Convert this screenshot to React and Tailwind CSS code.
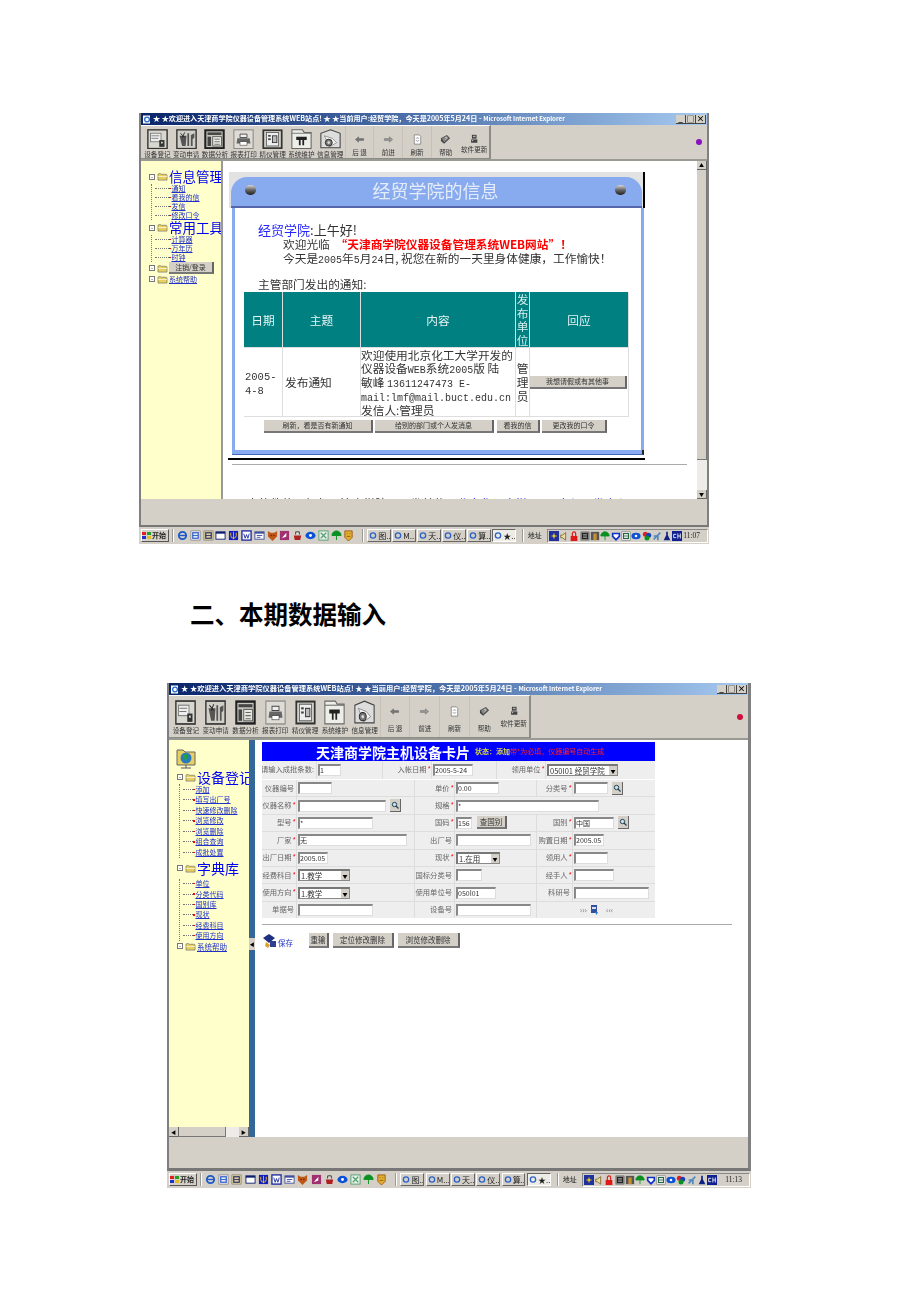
import React from "react";

const CJK = { fontFamily: '"Noto Sans CJK SC","Noto Sans",sans-serif' };

function ToolIcon({ id, className }) {
  const s = { className, viewBox: "0 0 24 24", preserveAspectRatio: "none" };
  if (id === 0) return <svg {...s}><rect x="1" y="1" width="22" height="22" fill="#d8d8d0" stroke="#333" strokeWidth="1.6"/><rect x="4" y="5" width="12" height="10" fill="#eee" stroke="#777"/><path d="M5 8h9M5 11h8" stroke="#777"/><rect x="14" y="13" width="6" height="8" fill="#333"/><rect x="16" y="15" width="2" height="2" fill="#ddd"/></svg>;
  if (id === 1) return <svg {...s}><rect x="1" y="1" width="22" height="22" fill="#d0d0c8" stroke="#333" strokeWidth="1.6"/><path d="M4 8l3 12h4l1-12zM13 5h2v15h-2zM17 7l4-2v5l-2 2v8h-2z" fill="#555"/><path d="M5 5l5 5M10 4l-3 6" stroke="#222"/></svg>;
  if (id === 2) return <svg {...s}><rect x="1.5" y="1.5" width="21" height="21" fill="#c8c8c0" stroke="#222" strokeWidth="2.4"/><rect x="4" y="4" width="16" height="3" fill="#444"/><rect x="4" y="9" width="4" height="11" fill="#444"/><rect x="10" y="9" width="10" height="11" fill="#e8e8e0" stroke="#555"/><path d="M12 12h6M12 15h6M12 18h6" stroke="#666"/></svg>;
  if (id === 3) return <svg {...s}><rect x="1" y="1" width="22" height="22" fill="#dedcd4" stroke="#888" strokeWidth="1.2"/><path d="M8 6h8v4H8z" fill="#eee" stroke="#444"/><path d="M5 11h14l1 6H4z" fill="#666"/><rect x="8" y="15" width="8" height="4" fill="#fff" stroke="#333" strokeWidth=".6"/></svg>;
  if (id === 4) return <svg {...s}><rect x="1.5" y="1.5" width="21" height="21" fill="#d8d8d0" stroke="#333" strokeWidth="2"/><rect x="5" y="4" width="14" height="16" fill="#eee" stroke="#555"/><rect x="7" y="7" width="3" height="2" fill="#444"/><rect x="7" y="11" width="3" height="2" fill="#444"/><rect x="12" y="8" width="5" height="8" fill="#bbb" stroke="#333"/></svg>;
  if (id === 5) return <svg {...s}><path d="M1 5V1h12l2 3h8v19H1z" fill="#eeeee8" stroke="#666" strokeWidth="1.2"/><path d="M1 5h22" stroke="#666"/><path d="M6 9h12v4h-3v6h-2v-6h-2v6H9v-6H6z" fill="#222"/></svg>;
  if (id === 6) return <svg {...s}><path d="M12 1l11 4v17H1V5z" fill="#ddd" stroke="#444" strokeWidth="1.2"/><path d="M5 8l9 3 5 5-8 5z" fill="#f4f4f0" stroke="#666" strokeWidth=".7"/><circle cx="10" cy="16" r="4" fill="#777" stroke="#222"/><circle cx="10" cy="16" r="1.5" fill="#ddd"/></svg>;
  if (id === "back") return <svg {...s}><path d="M3 12l7-6v4h11v4H10v4z" fill="#777" stroke="#444" strokeWidth=".7"/></svg>;
  if (id === "fwd") return <svg {...s}><path d="M21 12l-7-6v4H3v4h11v4z" fill="#999" stroke="#444" strokeWidth=".7"/></svg>;
  if (id === "ref") return <svg {...s}><path d="M5 2h11l3 3v17H5z" fill="#fff" stroke="#555" strokeWidth="1.2"/><path d="M9 10a3.5 3.5 0 0 1 6 0M15 14a3.5 3.5 0 0 1-6 0" fill="none" stroke="#444" strokeWidth="1.3"/></svg>;
  if (id === "help") return <svg {...s}><path d="M2 9l13-7 7 7-13 12-7-6z" fill="#444"/><path d="M4 10l11-6 4 5-10 9z" fill="#888"/><path d="M11 8c2-2 5 0 3 2l-2 2" fill="none" stroke="#eee" strokeWidth="1.4"/></svg>;
  return <svg {...s}><rect x="7" y="2" width="11" height="9" fill="#333"/><rect x="9" y="4" width="7" height="4" fill="#aaa"/><rect x="5" y="13" width="15" height="8" fill="#444"/><rect x="7" y="15" width="3" height="2" fill="#ddd"/></svg>;
}

const TOOLS = ["设备登记", "变动申请", "数据分析", "报表打印", "精仪管理", "系统维护", "信息管理"];

function Toolbar({ item, toolbarClass, iconClass, dotColor, mainPt, navClass, navLabel, softLabel }) {
  return (
    <div className="flex items-stretch justify-between bg-[#d4d0c8] border-b-2 border-[#9a9a94] pr-[5px]">
      <div className={`flex border-r-2 border-b border-[#8c8c86] border-t border-t-white ${toolbarClass}`}>
        {TOOLS.map((t, i) => (
          <div key={t} className={`${item} ${mainPt} flex flex-col items-center whitespace-nowrap text-[#333] leading-none text-[6.6px] gap-[2px]`}>
            <ToolIcon id={i} className={iconClass} />
            <span>{t}</span>
          </div>
        ))}
        {[["back", "后 退"], ["fwd", "前进"], ["ref", "刷新"], ["help", "帮助"]].map(([id, t]) => (
          <div key={id} className={`${item} flex flex-col items-center whitespace-nowrap text-[#333] leading-none text-[6.6px] border-l border-[#c6c2ba] ${navClass}`}>
            <ToolIcon id={id} className="w-[11px] h-[11px]" />
            <span className={navLabel}>{t}</span>
          </div>
        ))}
        <div className={`${item} flex flex-col items-center whitespace-nowrap text-[#333] leading-none text-[6.6px] ${navClass}`}>
          <ToolIcon id="soft" className="w-[10px] h-[10px]" />
          <span className={softLabel}>软件更新</span>
        </div>
      </div>
      <span className={`self-center w-[6px] h-[6px] rounded-full ${dotColor}`} />
    </div>
  );
}

function TitleBar({ textClass }) {
  return (
    <div className="h-[12px] flex items-center justify-between pl-[2px] pr-[1px] bg-gradient-to-r from-[#0a246a] to-[#a6caf0]">
      <div className={`flex items-center gap-[2px] whitespace-nowrap overflow-hidden font-bold text-white ${textClass}`}>
        <svg className="w-[8px] h-[9px] shrink-0" viewBox="0 0 8 9"><rect width="7" height="8" y=".5" fill="#fff"/><circle cx="4" cy="4.5" r="2.4" fill="none" stroke="#2a6fd0" strokeWidth="1.3"/></svg>
        <span>★ ★欢迎进入天津商学院仪器设备管理系统WEB站点! ★ ★当前用户:经贸学院，今天是2005年5月24日 - <span className="text-[0.87em]">Microsoft Internet Explorer</span></span>
      </div>
      <div className="flex gap-0 shrink-0">
        {["_", "□", "×"].map((c) => (
          <span key={c} className="w-[10px] h-[9px] bg-[#d4d0c8] border-r border-b border-[#444] text-black text-[8px] leading-[8px] text-center font-bold">{c}</span>
        ))}
      </div>
    </div>
  );
}

const TB = [
  ["#1c58c8", "#fff", "e"], ["#e8e8f8", "#2c5ec8", "s"], ["#d8d0a0", "#336", "n"], ["#fff", "#102070", "w"], ["#1020c0", "#f0c020", "y"], ["#2030a0", "#fff", "W"], ["#40509c", "#fff", "b"], ["#c05818", "#602010", "f"], ["#a03070", "#fff", "p"], ["#e0e0e0", "#b02020", "r"], ["#0a50d8", "#fff", "c"], ["#50a070", "#fff", "x"], ["#fff", "#0a9020", "u"], ["#e0b030", "#a05810", "l"],
];
const TRAY = [
  ["#20309c", "#e8d020", "g"], ["#d4d0c8", "#806030", "v"], ["#e01818", "#200", "k"], ["#888", "#222", "m"], ["#555", "#c89030", "d"], ["#fff", "#0a9020", "u"], ["#1030c8", "#fff", "o"], ["#eee", "#264", "n"], ["#0a50d8", "#fff", "c"], ["#e02020", "#0a9020", "q"], ["#5088c0", "#444", "z"], ["#d4d0c8", "#102080", "t"], ["#102090", "#fff", "C"],
];

function Glyph({ g, cls = "w-[11px] h-[11px] shrink-0" }) {
  const [bg, fg, k] = g;
  const s = { className: cls, viewBox: "0 0 12 12" };
  if (k === "u") return <svg {...s}><path d="M1 6a5 5 0 0 1 10 0zM6 6v5" fill={fg} stroke={fg}/></svg>;
  if (k === "e") return <svg {...s}><circle cx="6" cy="6" r="4" fill="none" stroke={bg} strokeWidth="2"/><path d="M2 6h8" stroke={bg} strokeWidth="1.5"/></svg>;
  if (k === "c") return <svg {...s}><ellipse cx="6" cy="6" rx="5.5" ry="4" fill={bg}/><circle cx="6" cy="6" r="1.6" fill={fg}/></svg>;
  if (k === "v") return <svg {...s}><path d="M2 5h2l4-3v9L4 8H2z" fill="#e8e0a0" stroke={fg}/></svg>;
  if (k === "k") return <svg {...s}><path d="M4 6V3a2 2 0 0 1 4 0v3" fill="none" stroke={bg} strokeWidth="1.4"/><rect x="2" y="6" width="8" height="6" fill={bg}/></svg>;
  if (k === "o") return <svg {...s}><path d="M1 2h10v5l-5 5-5-5z" fill={bg}/><path d="M3 4h6v2l-3 3-3-3z" fill={fg}/></svg>;
  if (k === "q") return <svg {...s}><circle cx="4" cy="4" r="3" fill="#e02020"/><circle cx="8" cy="5" r="3" fill="#1040c0"/><circle cx="6" cy="8.5" r="3" fill="#0a9020"/></svg>;
  if (k === "l") return <svg {...s}><path d="M2 1h8v7l-4 4-4-4z" fill={bg} stroke={fg}/><path d="M4 4h1M7 4h1M4 7h4" stroke={fg}/></svg>;
  if (k === "w") return <svg {...s}><rect x="1" y="2" width="10" height="8" fill={bg} stroke={fg}/><rect x="1" y="2" width="10" height="2" fill={fg}/></svg>;
  if (k === "y") return <svg {...s}><rect x="1" y="1" width="10" height="10" fill={bg}/><path d="M3 3v3a3 3 0 0 0 6 0V3M6 2v8" fill="none" stroke={fg}/></svg>;
  if (k === "W") return <svg {...s}><rect x="1" y="1" width="10" height="10" fill="#fff" stroke={bg} strokeWidth="1.5"/><path d="M3 4l1.5 5L6 5l1.5 4L9 4" fill="none" stroke={bg}/></svg>;
  if (k === "f") return <svg {...s}><path d="M1 1l3 2h4l3-2v6l-5 5-5-5z" fill={bg}/><circle cx="4.5" cy="6" r=".8" fill={fg}/><circle cx="7.5" cy="6" r=".8" fill={fg}/></svg>;
  if (k === "x") return <svg {...s}><rect x="1" y="1" width="10" height="10" fill="#e8f0e8" stroke={bg}/><path d="M3 3l6 6M9 3l-6 6" stroke={bg} strokeWidth="1.3"/></svg>;
  if (k === "p") return <svg {...s}><rect x="1" y="1" width="10" height="10" fill={bg}/><path d="M3 9l5-6v4z" fill={fg}/></svg>;
  if (k === "r") return <svg {...s}><path d="M2 6h8l-1 5H3z" fill={fg}/><path d="M4 5V2h4v3" fill={bg} stroke="#333"/></svg>;
  if (k === "b") return <svg {...s}><rect x="1" y="2" width="10" height="8" fill={fg} stroke={bg}/><rect x="1" y="2" width="10" height="2" fill={bg}/><path d="M3 6h6M3 8h4" stroke={bg}/></svg>;
  if (k === "g") return <svg {...s}><rect x="0" y="0" width="12" height="12" fill={bg}/><path d="M6 2l1 3 3 1-3 1-1 3-1-3-3-1 3-1z" fill={fg}/></svg>;
  if (k === "C") return <svg {...s}><rect x="0" y="0" width="12" height="12" fill={bg}/><path d="M5 4H2v4h3M7 3v6M10 3v6M7 6h3" fill="none" stroke={fg}/></svg>;
  if (k === "t") return <svg {...s}><path d="M5 1h2v4l3 6H2l3-6z" fill={fg}/></svg>;
  if (k === "d") return <svg {...s}><rect x="1" y="1" width="10" height="10" fill={bg}/><rect x="4" y="3" width="4" height="8" fill={fg}/></svg>;
  if (k === "z") return <svg {...s}><path d="M2 10l8-8M2 6h5v5" stroke={bg} strokeWidth="2" fill="none"/></svg>;
  return <svg {...s}><rect x="1" y="1" width="10" height="10" fill={bg} stroke="#555" strokeWidth=".5"/><rect x="3" y="3" width="6" height="6" fill="none" stroke={fg} strokeWidth="1.3"/><path d="M3 6h6" stroke={fg}/></svg>;
}

function Taskbar({ w, quickGap, taskW, clock }) {
  const tasks = ["图..", "M...", "天..", "仪..", "算..", "★.."];
  return (
    <div className={`${w} h-[17px] bg-[#d4d0c8] flex items-center pl-[2px] text-[8px] text-[#222]`}>
      <div className="flex items-center gap-[1px] h-[13px] w-[28px] bg-[#d4d0c8] border-r border-b border-[#555] border-t border-l border-t-white border-l-white font-bold text-[7px] whitespace-nowrap shrink-0">
        <svg className="w-[9px] h-[9px] shrink-0" viewBox="0 0 9 9"><path d="M0 1h4v3H0z" fill="#e02020"/><path d="M5 1h4v3H5z" fill="#20a020"/><path d="M0 5h4v3H0z" fill="#2030d0"/><path d="M5 5h4v3H5z" fill="#e0c020"/></svg>
        <span>开始</span>
      </div>
      <span className="w-[2px] h-[13px] mx-[3px] border-x border-l-[#999] border-r-white shrink-0" />
      <div className={`flex items-center ${quickGap} shrink-0`}>{TB.map((g, i) => <Glyph key={i} g={g} />)}</div>
      <span className="w-[2px] h-[13px] ml-[8px] mr-[3px] border-x border-l-[#999] border-r-white shrink-0" />
      <div className="flex items-center gap-[1.5px] shrink-0">
        {tasks.map((t, i) => (
          <div key={t} className={`${taskW} h-[13px] flex items-center gap-[1px] border pl-[1px] overflow-hidden whitespace-nowrap ${i === 5 ? "bg-[#eeece6] border-t-[#666] border-l-[#666] border-r-white border-b-white" : "border-t-white border-l-white border-r-[#666] border-b-[#666]"}`}>
            <svg className="w-[8px] h-[9px] shrink-0" viewBox="0 0 9 9"><circle cx="4.5" cy="4.5" r="3" fill="none" stroke="#2a62c8" strokeWidth="1.5"/></svg>
            <span>{t}</span>
          </div>
        ))}
      </div>
      <span className="w-[2px] h-[13px] ml-[6px] border-x border-l-[#999] border-r-white shrink-0" />
      <span className="ml-[4px] mr-[5px] shrink-0 text-[7px]">地址</span>
      <div className="flex-1 h-[14px] flex items-center justify-between border border-t-[#888] border-l-[#888] border-r-white border-b-white pl-[1px] pr-[7px] mr-[1px] min-w-0">
        <div className="flex items-center gap-[0.3px] shrink-0">{TRAY.map((g, i) => <Glyph key={i} g={g} cls="w-[10px] h-[10px] shrink-0" />)}</div>
        <span className="text-[7.5px] font-['Liberation_Serif',serif]">{clock}</span>
      </div>
    </div>
  );
}

function Folder() {
  return <svg className="w-[11px] h-[9px] ml-[2px] mr-[1px] shrink-0" viewBox="0 0 12 10"><path d="M1 2.5C1 1.5 4 1.5 5 2.5h5c1 0 1 1 1 1V9H1z" fill="#e8d060" stroke="#666" strokeWidth=".7"/><path d="M1 5h10" stroke="#fff" strokeWidth=".7"/></svg>;
}

function Toggle() {
  return <span className="w-[6px] h-[6px] border border-[#777] bg-white flex items-center justify-center text-[6px] leading-none text-[#444] shrink-0">-</span>;
}

function Head({ label, size, h, big }) {
  return (
    <div className={`flex items-center ${h} whitespace-nowrap`}>
      <Toggle />
      <Folder />
      <span className={`${size} ${big ? "text-[#0000f0]" : "text-[#2030c8] underline"} leading-none`}>{label}</span>
    </div>
  );
}

function Item({ label, h, dash }) {
  return (
    <div className={`flex items-center ${h} whitespace-nowrap pl-[3px]`}>
      <span className={`${dash} h-0 border-t border-dotted border-[#777] shrink-0`} />
      <span className="w-[1.5px] h-[1.5px] bg-[#ff0000] mr-[1px] shrink-0" />
      <span className="text-[7px] text-[#2030c8] underline leading-none">{label}</span>
    </div>
  );
}

function Mono({ children, className = "text-[10px]" }) {
  return <span className={`font-['Liberation_Mono',monospace] ${className}`}>{children}</span>;
}

function Ball() {
  return <span className="w-[11px] h-[10px] rounded-full bg-gradient-to-b from-[#d8d8d8] via-[#666] to-[#222] shrink-0" />;
}

function Btn({ w, children, h = "h-[13px]", text = "text-[7px]" }) {
  return (
    <div className={`${w} ${h} ${text} bg-[#d4d0c8] border-r-2 border-b-2 border-r-[#666] border-b-[#777] flex items-center justify-center text-[#333] whitespace-nowrap leading-none shrink-0`}>
      {children}
    </div>
  );
}

function Scrollbar() {
  return (
    <div className="w-[10px] flex flex-col bg-[#eeece8] shrink-0">
      <div className="h-[9px] bg-[#d4d0c8] border-r border-b border-[#666] text-[5px] leading-[8px] text-center">▲</div>
      <div className="h-[290px] bg-[#d4d0c8] border-r border-b border-[#777]" />
      <div className="flex-1" />
      <div className="h-[9px] bg-[#d4d0c8] border-r border-b border-[#666] text-[5px] leading-[8px] text-center">▼</div>
    </div>
  );
}

function Line({ children, className = "" }) {
  return <div className={`h-[13.7px] leading-[13.7px] overflow-visible ${className}`}>{children}</div>;
}

function First() {
  return (
    <div className="w-[570px] border-b-2 border-[#777] border-x-2 border-x-[#808080] bg-[#d4d0c8]">
      <TitleBar textClass="text-[7.1px] leading-none" />
      <Toolbar item="w-[28.8px]" toolbarClass="h-[34px] pl-[2px]" iconClass="w-[21px] h-[21px]" dotColor="bg-[#8a10c0]" mainPt="pt-[3px]" navClass="pt-[8px]" navLabel="mt-[4px]" softLabel="mt-[2px]" />
      <div className="flex h-[338px] overflow-hidden bg-white">
        <div className="w-[82px] shrink-0 overflow-hidden bg-[#ffffcc] border-r-2 border-[#999] pl-[8px] pt-[8px]">
          <Head label="信息管理" size="text-[13.5px]" h="h-[15px]" big />
          <div className="ml-[2px] border-l border-dotted border-[#777]">
            {["通知", "看我的信", "发信", "修改口令"].map((t) => <Item key={t} label={t} h="h-[9px]" dash="w-[14px]" />)}
          </div>
          <Head label="常用工具" size="text-[13.5px]" h="h-[15px]" big />
          <div className="ml-[2px] border-l border-dotted border-[#777]">
            {["计算器", "万年历", "时钟"].map((t) => <Item key={t} label={t} h="h-[9px]" dash="w-[14px]" />)}
          </div>
          <div className="flex items-center">
            <Toggle />
            <Folder />
            <Btn w="w-[45px]" h="h-[12px]">注销/登录</Btn>
          </div>
          <Head label="系统帮助" size="text-[7px]" h="h-[10px]" />
        </div>
        <div className="flex-1 min-w-0 overflow-hidden text-[#333] text-[11.7px] leading-[13.7px]">
          <div className="ml-[6px] mt-[11px] w-[416px]">
            <div className="bg-[#e2e2e2] pt-[5px] pr-[1px] border-r-2 border-black">
              <div className="h-[31px] ml-[2px] rounded-tl-[16px] rounded-tr-[16px] bg-[#88aaee] border-b-[2px] border-[#5566aa] flex items-center justify-between pl-[14px] pr-[16px] pb-[4px]">
                <Ball />
                <span className="text-[18px] text-[#e4ecfa] leading-none">经贸学院的信息</span>
                <Ball />
              </div>
            </div>
            <div className="border-x-[3px] border-[#88aaee] bg-white ml-[3px] mr-[1px] pb-[17px]">
              <div className="h-[84px] pt-[15px] pl-[23px] whitespace-nowrap">
                <div className="h-[14px] leading-[14px] text-[13px]"><span className="text-[#2424ff]">经贸学院</span>:上午好!</div>
                <Line className="pl-[25px]">欢迎光临　<span className="text-[#ff0000] font-bold">“天津商学院仪器设备管理系统WEB网站”！</span></Line>
                <Line className="pl-[25px]">今天是<Mono>2005</Mono>年<Mono>5</Mono>月<Mono>24</Mono>日, 祝您在新的一天里身体健康，工作愉快！</Line>
                <Line className="mt-[13px]">主管部门发出的通知:</Line>
              </div>
              <div className="ml-[9px] w-[385px] grid grid-cols-[38px_77px_154px_13px_98px] grid-rows-[55px_68px] gap-px bg-[#dedede] border-b border-r border-[#dedede]">
                {["日期", "主题", "内容"].map((t) => <div key={t} className="bg-[#008080] text-[#e8f4f4] flex items-center justify-center">{t}</div>)}
                <div className="bg-[#008080] text-[#d8eeee] text-center leading-[13.7px] overflow-hidden">发<br />布<br />单<br />位</div>
                <div className="bg-[#008080] text-[#e8f4f4] flex items-center justify-center">回应</div>
                <div className="bg-white flex items-center pl-[1px]"><div><Line><Mono className="text-[10.5px]">2005-</Mono></Line><Line><Mono className="text-[10.5px]">4-8</Mono></Line></div></div>
                <div className="bg-white flex items-center pl-[2px]">发布通知</div>
                <div className="bg-white flex items-center whitespace-nowrap overflow-hidden">
                  <div>
                    <Line>欢迎使用北京化工大学开发的</Line>
                    <Line>仪器设备<Mono>WEB</Mono>系统<Mono>2005</Mono>版 陆</Line>
                    <Line>敏峰 <Mono>13611247473 E-</Mono></Line>
                    <Line><Mono>mail:lmf@mail.buct.edu.cn</Mono></Line>
                    <Line>发信人:管理员</Line>
                  </div>
                </div>
                <div className="bg-white flex items-center justify-center text-center overflow-hidden">管<br />理<br />员</div>
                <div className="bg-white flex items-center justify-center pr-[1px]"><Btn w="w-[97px]">我想请假或有其他事</Btn></div>
              </div>
              <div className="flex mt-[3px] ml-[29px]">
                <Btn w="w-[109px]">刷新，看是否有新通知</Btn>
                <Btn w="w-[119px] ml-[2px]">给别的部门或个人发消息</Btn>
                <Btn w="w-[43px] ml-[3px]">看我的信</Btn>
                <Btn w="w-[65px] ml-[2px]">更改我的口令</Btn>
              </div>
            </div>
            <div className="ml-[3px] mr-[1px] h-[5px] bg-[#88aaee] border-b border-[#4466bb] border-r-2 border-r-[#222]" />
            <div className="h-[3px]" />
            <div className="-ml-[1px] h-[2px] bg-black" />
          </div>
          <div className="ml-[9px] mr-[10px] mt-[4px] h-px bg-[#aaa]" />
          <div className="ml-[14px] mt-[31px] whitespace-nowrap">1.本软件使用权归天津商学院，开发单位：<span className="text-[#3030ff]">北京化工大学VIO研究与开发中心 64419363</span></div>
        </div>
        <Scrollbar />
      </div>
      <div className="h-[26px]" />
    </div>
  );
}

function Field({ w, v }) {
  return <div className={`${w} h-[12px] bg-white border-t-2 border-l-2 border-[#888] border-r border-b border-r-[#ddd] border-b-[#ddd] text-[7px] leading-[9px] text-[#333] whitespace-nowrap overflow-hidden shrink-0`}>{v}</div>;
}

function Select({ w, v }) {
  return (
    <div className={`${w} h-[12px] bg-white border-t-2 border-l-2 border-[#777] border-r border-b border-r-[#888] border-b-[#888] text-[7.5px] leading-[9px] text-[#333] flex justify-between whitespace-nowrap shrink-0 overflow-hidden pl-[1px]`}>
      <span>{v}</span>
      <span className="w-[8px] h-full bg-[#d4d0c8] text-[5px] leading-[9px] text-center text-black shrink-0">▼</span>
    </div>
  );
}

function Search() {
  return (
    <div className="w-[11px] h-[13px] ml-[4px] bg-[#d4d0c8] border-r border-b border-[#666] flex items-center justify-center shrink-0">
      <svg className="w-[8px] h-[8px]" viewBox="0 0 8 8"><circle cx="3.5" cy="3.5" r="2.2" fill="#cde" stroke="#245" strokeWidth="1"/><path d="M5 5l2.5 2.5" stroke="#245" strokeWidth="1.3"/></svg>
    </div>
  );
}

function Label({ t, req }) {
  return (
    <div className="bg-[#eeeeee] flex items-center justify-end text-[7.3px] text-[#666] whitespace-nowrap leading-none overflow-hidden">
      {t}{req ? <span className="text-[#ff0000] ml-[1px]">*</span> : <span className="ml-[2px]" />}
    </div>
  );
}

function Cell({ children, className = "" }) {
  return <div className={`bg-[#eeeeee] flex items-center pl-[1px] ${className}`}>{children}</div>;
}

function Second() {
  const items1 = ["添加", "填写出厂号", "快速修改删除", "浏览修改", "浏览删除", "组合查询", "成批处置"];
  const items2 = ["单位", "分类代码", "国别库", "现状", "经费科目", "使用方向"];
  return (
    <div className="w-[584px] border-b-[3px] border-[#777] border-x-2 border-x-[#808080] border-r-[3px] bg-[#d4d0c8]">
      <TitleBar textClass="text-[7.25px] leading-none" />
      <Toolbar item="w-[29.8px]" toolbarClass="h-[43px] pl-[2px]" iconClass="w-[21px] h-[25px]" dotColor="bg-[#d0103c]" mainPt="pt-[4px]" navClass="pt-[10px]" navLabel="mt-[8px]" softLabel="mt-[4px]" />
      <div className="flex h-[397px] overflow-hidden bg-white">
        <div className="w-[80px] shrink-0 flex flex-col bg-[#ffffcc] overflow-hidden">
          <div className="flex-1 pl-[8px] pt-[7px]">
            <svg className="w-[20px] h-[22px] -ml-[1px]" viewBox="0 0 20 22"><path d="M1 3h6l2 2h10v13H1z" fill="#e8d060" stroke="#666"/><circle cx="10" cy="11" r="5.5" fill="#2a7ac0"/><path d="M7 8l4-1 1 4-3 3z" fill="#20a040"/><path d="M10 18v3M5 21h10" stroke="#555"/></svg>
            <Head label="设备登记" size="text-[14px]" h="h-[14px] mt-[1px]" big />
            <div className="ml-[2px] border-l border-dotted border-[#777]">
              {items1.map((t) => <Item key={t} label={t} h="h-[10.5px]" dash="w-[10px]" />)}
            </div>
            <Head label="字典库" size="text-[14px]" h="h-[21px]" big />
            <div className="ml-[2px] border-l border-dotted border-[#777]">
              {items2.map((t) => <Item key={t} label={t} h="h-[10.4px]" dash="w-[10px]" />)}
            </div>
            <Head label="系统帮助" size="text-[7.5px]" h="h-[11px]" />
          </div>
          <div className="h-[10px] flex bg-[#eeece8] shrink-0">
            <div className="w-[10px] bg-[#d4d0c8] border-r border-b border-[#666] text-[5px] leading-[9px] text-center">◀</div>
            <div className="w-[47px] bg-[#d4d0c8] border-r border-b border-[#777]" />
            <div className="flex-1" />
            <div className="w-[10px] bg-[#d4d0c8] border-r border-b border-[#666] text-[5px] leading-[9px] text-center">▶</div>
          </div>
        </div>
        <div className="w-[6px] shrink-0 bg-[#336699] flex items-center">
          <span className="w-[6px] h-[12px] mt-[10px] bg-[#d4d0c8] text-[5px] leading-[12px] text-center text-black">◀</span>
        </div>
        <div className="flex-1 min-w-0 overflow-hidden pt-[2px] pl-[7px] bg-white text-[#333]">
          <div className="w-[393px] h-[19px] bg-[#0000ff] flex items-center whitespace-nowrap pl-[54px] leading-none">
            <span className="text-[14px] font-bold text-white">天津商学院主机设备卡片</span>
            <span className="text-[7px] font-bold text-[#d8d840] ml-[5px]">状态：添加</span>
            <span className="text-[7px] text-[#ff2020]">带*为必填，仪器编号自动生成</span>
          </div>
          <div className="w-[393px] h-[18px] grid grid-cols-[54px_65px_48px_64px_48px_109px] gap-x-px bg-[#dddddd]">
            <Label t="请输入成批条数:" />
            <Cell><Field w="w-[23px]" v="1" /></Cell>
            <Label t="入帐日期" req />
            <Cell><Field w="w-[40px]" v="2005-5-24" /></Cell>
            <Label t="领用单位" req />
            <Cell><Select w="w-[71px]" v="050I01 经贸学院" /></Cell>
          </div>
          <div className="w-[393px] mt-px grid grid-cols-[34px_117px_39px_81px_35px_82px] auto-rows-[16.4px] gap-px bg-[#dddddd]">
            <Label t="仪器编号" />
            <Cell><Field w="w-[34px]" /></Cell>
            <Label t="单价" req />
            <Cell><Field w="w-[43px]" v="0.00" /></Cell>
            <Label t="分类号" req />
            <Cell><Field w="w-[34px]" /><Search /></Cell>

            <Label t="仪器名称" req />
            <Cell><Field w="w-[88px]" /><Search /></Cell>
            <Label t="规格" req />
            <Cell className="col-span-3"><Field w="w-[143px]" v="*" /></Cell>

            <Label t="型号" req />
            <Cell><Field w="w-[75px]" v="*" /></Cell>
            <Label t="国码" req />
            <Cell><Field w="w-[16px]" v="156" /><Btn w="w-[30px] ml-[5px]" text="text-[7.5px]">查国别</Btn></Cell>
            <Label t="国别" req />
            <Cell><Field w="w-[40px]" v="中国" /><Search /></Cell>

            <Label t="厂家" req />
            <Cell><Field w="w-[109px]" v="无" /></Cell>
            <Label t="出厂号" />
            <Cell><Field w="w-[75px]" /></Cell>
            <Label t="购置日期" req />
            <Cell><Field w="w-[30px]" v="2005.05" /></Cell>

            <Label t="出厂日期" req />
            <Cell><Field w="w-[30px]" v="2005.05" /></Cell>
            <Label t="现状" req />
            <Cell><Select w="w-[44px]" v="1.在用" /></Cell>
            <Label t="领用人" req />
            <Cell><Field w="w-[34px]" /></Cell>

            <Label t="经费科目" req />
            <Cell><Select w="w-[52px]" v="1.教学" /></Cell>
            <Label t="国标分类号" />
            <Cell><Field w="w-[26px]" /></Cell>
            <Label t="经手人" req />
            <Cell><Field w="w-[40px]" /></Cell>

            <Label t="使用方向" req />
            <Cell><Select w="w-[52px]" v="1.教学" /></Cell>
            <Label t="使用单位号" />
            <Cell><Field w="w-[40px]" v="050I01" /></Cell>
            <Label t="科研号" />
            <Cell><Field w="w-[75px]" /></Cell>

            <Label t="单据号" />
            <Cell><Field w="w-[75px]" /></Cell>
            <Label t="设备号" />
            <Cell><Field w="w-[75px]" /></Cell>
            <Cell className="col-span-2 justify-center text-[8px] text-[#777] gap-[3px]">
              <span>›››</span>
              <svg className="w-[9px] h-[10px]" viewBox="0 0 9 10"><rect x="1" y="0" width="6" height="8" fill="#3050a0"/><rect x="2" y="2" width="4" height="2" fill="#dde"/><path d="M5 7h3l-1.5 3z" fill="#2080d0"/></svg>
              <span className="ml-[4px]">‹‹‹</span>
            </Cell>
          </div>
          <div className="w-[470px] h-px mt-[6px] bg-[#aaa]" />
          <div className="flex items-center mt-[8px] text-[7.5px] whitespace-nowrap">
            <svg className="w-[15px] h-[15px] shrink-0" viewBox="0 0 15 15"><path d="M1 5l6-4 6 4-6 5z" fill="#203080"/><path d="M4 9l4 3-2 3-3-2z" fill="#e0a030"/><rect x="8" y="8" width="6" height="6" fill="#304090"/></svg>
            <span className="text-[#2030c8] ml-[1px] w-[31px] mt-[4px]">保存</span>
            <Btn w="w-[20px]" h="h-[15px]" text="text-[7.5px]">重输</Btn>
            <Btn w="w-[61px] ml-[4px]" h="h-[15px]" text="text-[7.5px]">定位修改删除</Btn>
            <Btn w="w-[62px] ml-[4px]" h="h-[15px]" text="text-[7.5px]">浏览修改删除</Btn>
          </div>
        </div>
      </div>
      <div className="h-[31px]" />
    </div>
  );
}

export default function App() {
  return (
    <div className="w-[920px] h-[1302px] bg-white overflow-hidden pt-[113px]" style={CJK}>
      <div className="ml-[139px] blur-[0.35px]">
        <First />
        <Taskbar w="w-[570px]" quickGap="gap-[1.8px]" taskW="w-[23.5px]" clock="11:07" />
      </div>
      <h2 className="ml-[190px] mt-[56px] h-[28px] text-[24.5px] leading-[28px] font-bold text-black whitespace-nowrap">二、本期数据输入</h2>
      <div className="ml-[167px] mt-[55px] blur-[0.35px]">
        <Second />
        <Taskbar w="w-[584px]" quickGap="gap-[2.2px]" taskW="w-[23.8px]" clock="11:13" />
      </div>
    </div>
  );
}
